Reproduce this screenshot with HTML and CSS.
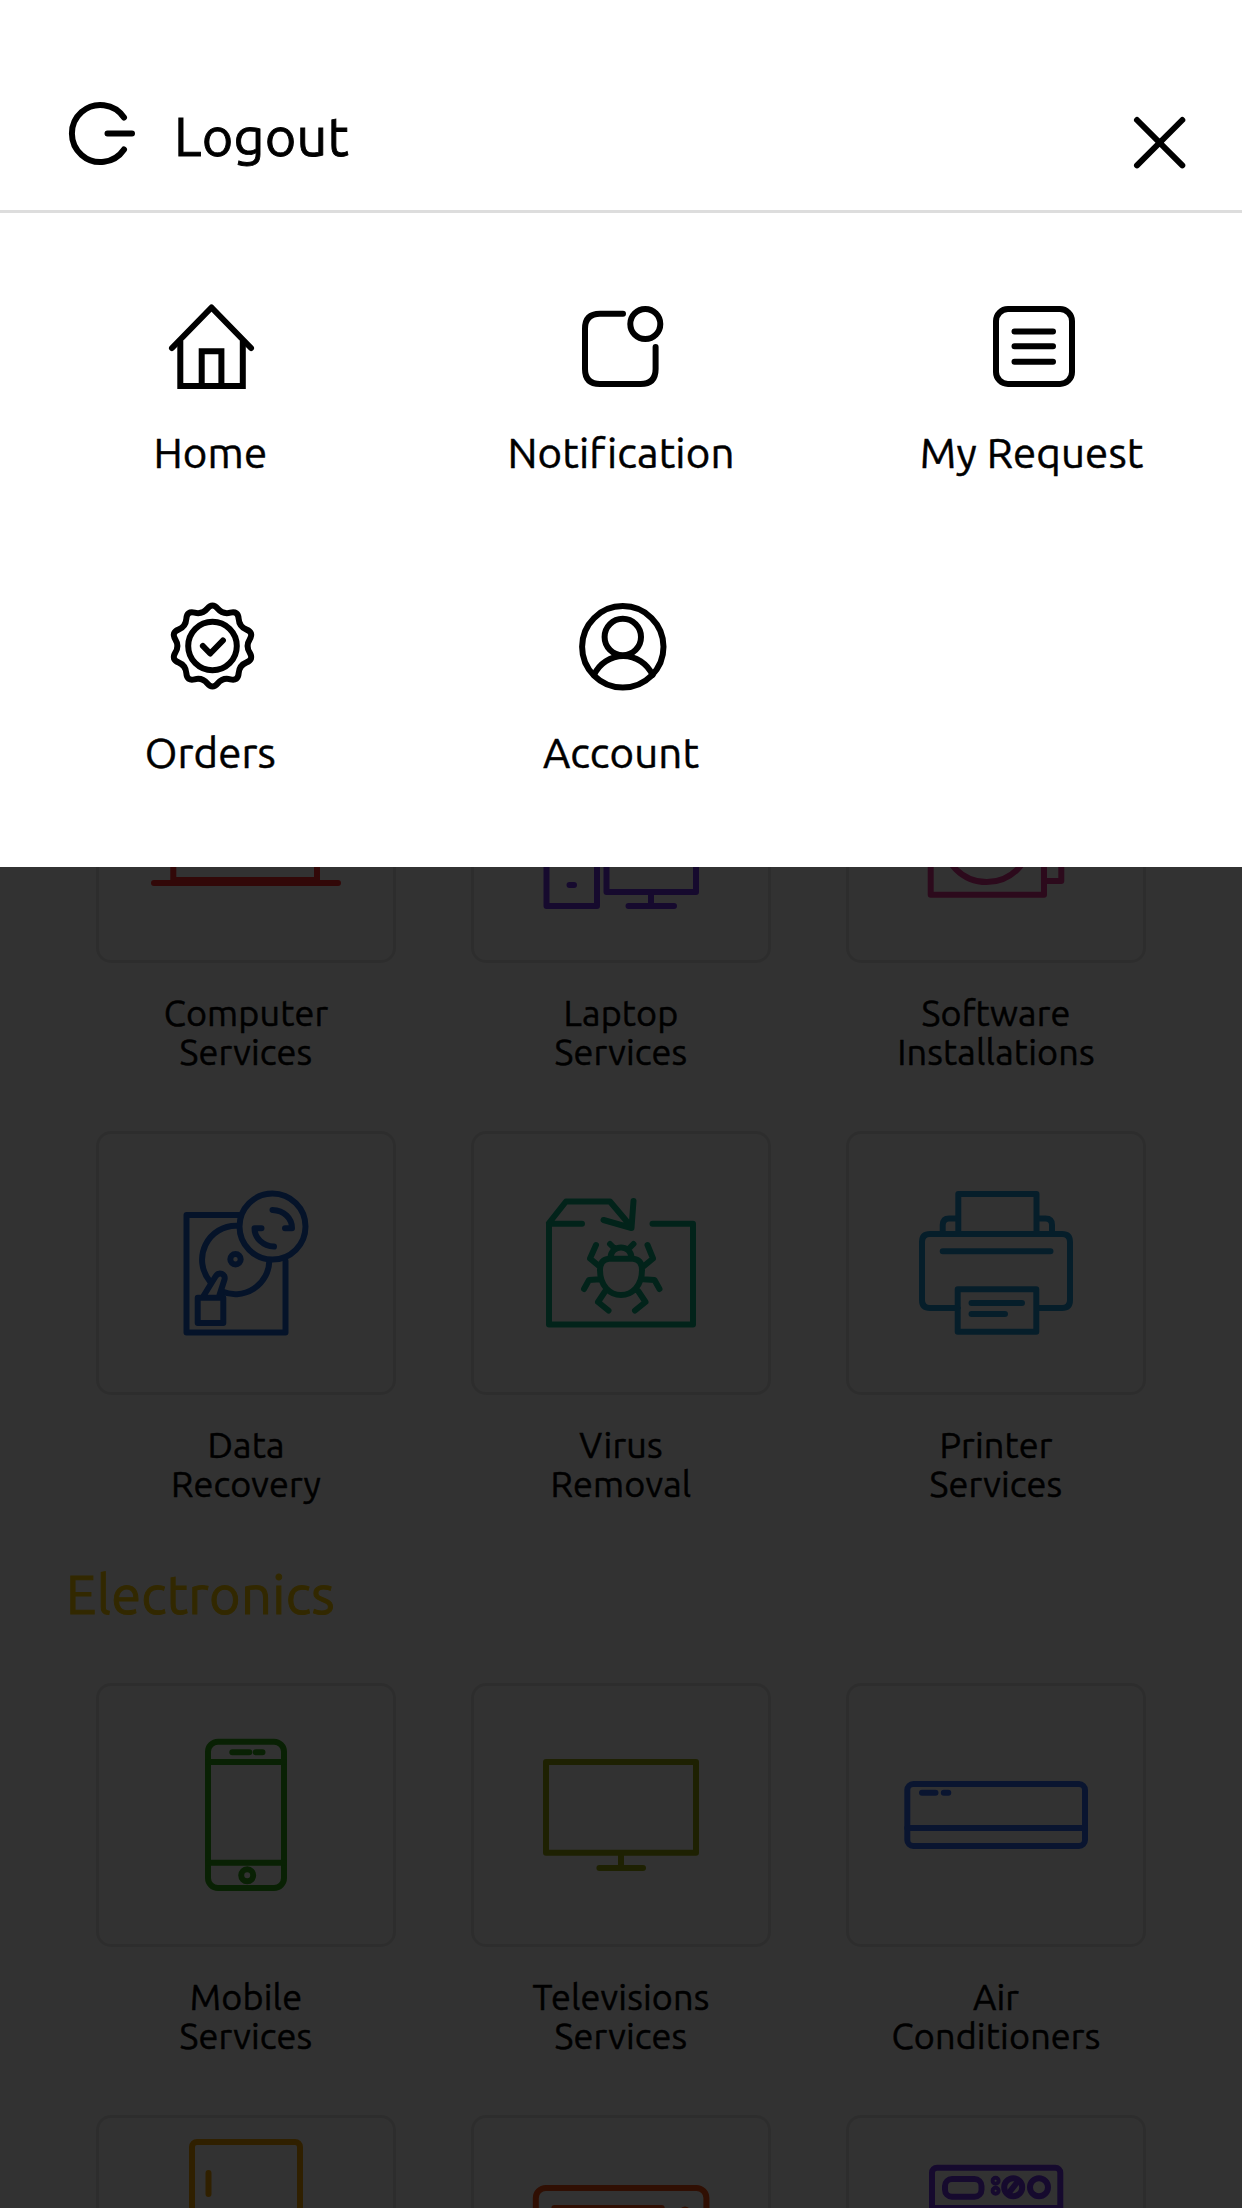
FILE: index.html
```html
<!DOCTYPE html>
<html lang="en">
<head>
<meta charset="utf-8">
<title>Services</title>
<link rel="stylesheet" href="styles.css">
</head>
<body>
<div class="screen">
  <main class="services">
    <section class="service-grid">
      <article class="service">
        <div class="card red"><svg viewBox="99 702 294 258"><path d="M173.3 880V776H317V880ZM154 883H338"/></svg></div>
        <p class="name">Computer<br>Services</p>
      </article>
      <article class="service">
        <div class="card indigo"><svg viewBox="474 702 294 258"><path d="M546.5 776H597V906H546.5ZM569.5 885H574M606.5 800H696V892H606.5ZM651 892V906M628.5 906H674"/></svg></div>
        <p class="name">Laptop<br>Services</p>
      </article>
      <article class="service">
        <div class="card pink"><svg viewBox="849 702 294 258"><path d="M930.7 783H1044V894.7H930.7ZM1044 770H1061.3V881H1044"/><circle cx="986.7" cy="838.5" r="43.5"/></svg></div>
        <p class="name">Software<br>Installations</p>
      </article>
      <article class="service">
        <div class="card blue"><svg viewBox="19 14 294 258"><path d="M159 95H106.5V212.5H205.5V141M157 105.7A34 34 0 0 0 130 161.5M142 171.5A34 34 0 0 0 189.3 141"/><circle cx="155.5" cy="139.2" r="5.2"/><circle cx="192.5" cy="106.5" r="33"/><path d="M192.5 90C204 90.500 212 98 212 108.300H205M194 126.500C183 126 174.500 118 174.500 108.300H181.500M117.700 177.700H143.300V203H117.700ZM123.500 176L135.500 156.500C139 151 146 154 144.500 159.500L139.500 175"/></svg></div>
        <p class="name">Data<br>Recovery</p>
      </article>
      <article class="service">
        <div class="card green"><svg viewBox="14 14 294 258"><path d="M122 103.700H89V204.500H233V103.700H192.500M89 103L106 81.500H150L171.500 107M173.500 81L171.500 108L143.500 100"/><path d="M149 138.700H173Q182 139.500 182 150C182 166 172 175 161 175S140 166 140 150Q140 139.500 149 138.700ZM150.500 137C151 131 156 127.500 161 127.500S171 131 171.500 137M150 124L154 128M173.500 124L169.500 128M136 125L130 138.500L139 146M187.500 125L193 138.500L184 146M124 169L129 160L140 159.200M199.500 169L194.500 160L183 159.200M148.500 190.500L138 182L145 171.500M175 190.500L185.500 182L178.500 171.500"/></svg></div>
        <p class="name">Virus<br>Removal</p>
      </article>
      <article class="service">
        <div class="card cyan"><svg viewBox="9 14 294 258"><path d="M118 188H90Q82 188 82 180V122Q82 114 90 114H222Q230 114 230 122V180Q230 188 222 188H199M118.300 114V74H196.500V114M102.700 114V105Q103 98.500 109 98.500H118M212 114V105Q212 98.500 205.500 98.500H197M102.700 131.300H210.500M117.700 169.300H196.300V211.700H117.700ZM131.500 183H182M131.500 194H165"/></svg></div>
        <p class="name">Printer<br>Services</p>
      </article>
    </section>

    <h2 class="heading">Electronics</h2>

    <section class="service-grid">
      <article class="service">
        <div class="card lime"><svg viewBox="59 276 294 258"><rect x="168" y="331.700" width="76" height="146.300" rx="10"/><path d="M168 352H244M168 452.700H244M192.300 342.300H209.300M215.800 342.300H222.500"/><circle cx="207.200" cy="465.300" r="6"/></svg></div>
        <p class="name">Mobile<br>Services</p>
      </article>
      <article class="service">
        <div class="card olive"><svg viewBox="14 16 294 258"><path d="M86 92H236V182.700H86ZM161 182.700V198M139.400 198H183"/></svg></div>
        <p class="name">Televisions<br>Services</p>
      </article>
      <article class="service">
        <div class="card azure"><svg viewBox="389 16 294 258"><rect x="447.300" y="114" width="177.700" height="62" rx="6"/><path d="M447.300 158H625M462 122.700H475.500M483.800 122.700H488.300"/></svg></div>
        <p class="name">Air<br>Conditioners</p>
      </article>
      <article class="service">
        <div class="card amber"><svg viewBox="3 3 294 258"><rect x="96" y="27" width="108" height="200" rx="5"/><path d="M112.500 58V79M96 110H204"/></svg></div>
      </article>
      <article class="service">
        <div class="card orange"><svg viewBox="3 3 294 258"><rect x="64.800" y="73" width="170.600" height="120" rx="10"/><rect x="83.400" y="93" width="107.300" height="80"/><circle cx="214" cy="97.500" r="3"/></svg></div>
      </article>
      <article class="service">
        <div class="card indigo"><svg viewBox="3 3 294 258"><rect x="86" y="52.700" width="128.300" height="160" rx="5"/><path d="M86 93H214M163.500 77L171 67.500"/><rect x="99" y="64" width="36.500" height="17.700" rx="7"/><circle cx="167.200" cy="72.300" r="9"/><circle cx="193" cy="72.300" r="9"/><g class="thin"><circle cx="149.600" cy="65.700" r="3"/><circle cx="149.600" cy="75.700" r="3"/></g></svg></div>
      </article>
    </section>
  </main>

  <div class="scrim"></div>

  <nav class="menu">
    <header class="menu-head">
      <a class="logout"><svg class="logout-icon" viewBox="68 100 70 68"><path d="M124 117.500A28.500 28.500 0 1 0 124 149.500M107.500 133.500H132"/></svg><span>Logout</span></a>
      <svg class="close" viewBox="1132 115 56 56"><path d="M1137 120L1182.300 165.300M1182.300 120L1137 165.300"/></svg>
    </header>
    <div class="menu-grid">
      <a class="item"><svg viewBox="162 302 96 88"><path d="M172 348L211.500 307.500L251 348"/><path class="square" d="M180.300 341V386H242.800V341M201.700 386V351.300H221.400V386"/></svg><span>Home</span></a>
      <a class="item"><svg viewBox="573 302 96 88"><path d="M623 313.700H600Q585 313.700 585 328.700V369Q585 384 600 384H640.600Q655.600 384 655.600 369V347"/><circle cx="645.300" cy="324" r="15"/></svg><span>Notification</span></a>
      <a class="item"><svg viewBox="984 302 96 88"><rect x="996" y="309" width="76" height="75" rx="12"/><path d="M1014.500 331.500H1053M1014.500 346.300H1053M1014.500 361.700H1053"/></svg><span>My Request</span></a>
      <a class="item"><svg viewBox="162 602 96 88"><g transform="translate(212.500 646)"><path d="M-5.100 -37.450Q0 -43.500 5.100 -37.450Q10.200 -31.400 17.900 -33.300Q25.600 -35.200 26.150 -27.300Q26.700 -19.400 34.050 -16.400Q41.400 -13.400 37.200 -6.700Q33 0 37.200 6.700Q41.400 13.400 34.050 16.400Q26.700 19.400 26.150 27.300Q25.600 35.200 17.900 33.300Q10.200 31.400 5.100 37.450Q0 43.500 -5.100 37.450Q-10.200 31.400 -17.900 33.300Q-25.600 35.200 -26.150 27.300Q-26.700 19.400 -34.050 16.400Q-41.400 13.400 -37.200 6.700Q-33 0 -37.200 -6.700Q-41.400 -13.400 -34.050 -16.400Q-26.700 -19.400 -26.150 -27.300Q-25.600 -35.200 -17.900 -33.300Q-10.200 -31.400 -5.100 -37.450Z"/><circle r="24.300"/><path d="M-9.600 0L-2.300 7.500L10.400 -5.500"/></g></svg><span>Orders</span></a>
      <a class="item"><svg viewBox="573 602 96 88"><circle cx="622.800" cy="646.800" r="40.700"/><circle cx="622.800" cy="637" r="18.200"/><path d="M594 675A32 32 0 0 1 652.500 675"/></svg><span>Account</span></a>
    </div>
  </nav>
</div>
</body>
</html>
```
FILE: styles.css
```css
* { box-sizing: border-box; }
body { margin: 0; background: #fafafa; font-family: Ubuntu, "Noto Sans", sans-serif; color: #000; }
svg { display: block; overflow: visible; fill: none; stroke: currentColor; stroke-width: 6; stroke-linecap: round; stroke-linejoin: round; }
.screen { position: relative; width: 1242px; height: 2208px; overflow: hidden; background: #fafafa; }

.services { padding: 699px 96px 0; }
.service-grid { display: grid; grid-template-columns: repeat(3, 300px); gap: 60px 75px; }
.card { height: 264px; border: 3px solid #e1e1e1; border-radius: 15px; }
.card svg { width: 294px; height: 258px; }
.thin { stroke-width: 4; }
.name { margin: 30px -20px 0; font-size: 36px; line-height: 39px; text-align: center; letter-spacing: 0.15px; -webkit-text-stroke: 0.5px; }
.heading { margin: 61px 0 59px -30px; font-size: 54px; line-height: 60px; font-weight: 400; color: #fac800; letter-spacing: 0.35px; -webkit-text-stroke: 1px; }

.red { color: #fa2828; }
.indigo { color: #6e32e6; }
.pink { color: #dc328c; }
.blue { color: #1960cd; }
.green { color: #0aaf82; }
.cyan { color: #1e96d2; }
.lime { color: #2da514; }
.olive { color: #96a50a; }
.azure { color: #3269f0; }
.amber { color: #f0a000; }
.orange { color: #f04b0f; }

.scrim { position: absolute; inset: 0; background: rgba(0, 0, 0, 0.8); }
.menu { position: absolute; top: 0; left: 0; width: 100%; height: 867px; background: #fff; }
.menu-head { display: flex; justify-content: space-between; height: 213px; padding: 100px 54px 0 68px; border-bottom: 3px solid #ddd; }
.logout { display: flex; gap: 36px; height: 68px; font-size: 54px; line-height: 60px; letter-spacing: 0.2px; -webkit-text-stroke: 0.9px; }
.logout span { margin-top: 6px; }
.logout-icon { width: 70px; height: 68px; }
.close { width: 56px; height: 56px; margin-top: 15px; }
.menu-grid { display: grid; grid-template-columns: repeat(3, 1fr); row-gap: 125px; padding: 89px 5px 0; }
.item { display: flex; flex-direction: column; align-items: center; gap: 39px; font-size: 42px; line-height: 48px; letter-spacing: 0.15px; -webkit-text-stroke: 0.5px; }
.item svg { width: 96px; height: 88px; }
.square { stroke-linecap: butt; stroke-linejoin: miter; }
```
